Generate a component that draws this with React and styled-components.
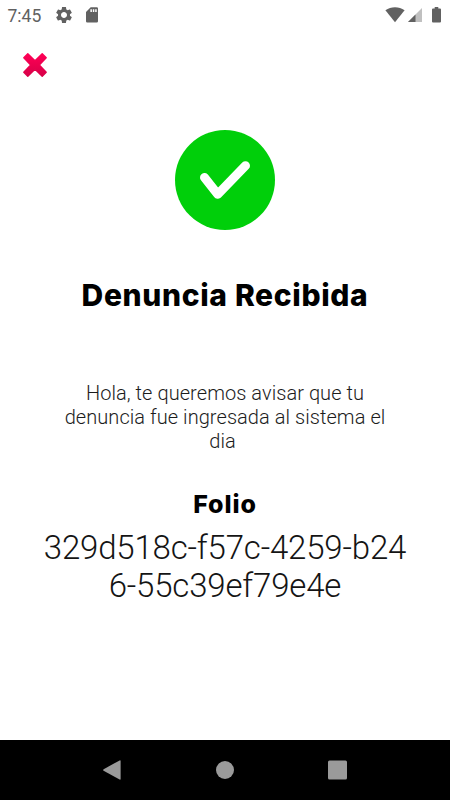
import React from 'react';
import styled, { createGlobalStyle } from 'styled-components';

const GlobalStyle = createGlobalStyle`
  * { box-sizing: border-box; }
  body { margin: 0; background: #fff; }
`;

const Screen = styled.div`
  width: 450px;
  height: 800px;
  display: flex;
  flex-direction: column;
  background: #fff;
  font-family: Roboto, sans-serif;
  color: #000;
  overflow: hidden;
`;

const StatusBar = styled.header`
  height: 30px;
  flex: none;
  display: flex;
  align-items: center;
  padding: 0 9px 0 7.5px;
  color: #616161;
`;

const Clock = styled.span`
  width: 46.5px;
  font-size: 17.5px;
  line-height: 30px;
  padding-top: 2px;
`;

const StatusIcon = styled.svg`
  display: block;
  flex: none;
  fill: currentColor;
  margin-left: ${(p) => p.$gap || 0}px;
`;

const Spacer = styled.div`
  flex: 1;
`;

const Content = styled.main`
  flex: 1;
  display: flex;
  flex-direction: column;
  align-items: center;
`;

const CloseButton = styled.button`
  align-self: flex-start;
  margin: 22px 0 0 22px;
  width: 26px;
  height: 26px;
  padding: 0;
  border: 0;
  background: none;
`;

const Glyph = styled.svg`
  display: block;
  flex: none;
`;

const SuccessIcon = styled(Glyph)`
  margin-top: 52px;
`;

const Title = styled.h1`
  margin: 45px 0 0;
  font: 850 30px/40px Inter, sans-serif;
  letter-spacing: 0.65px;
  white-space: nowrap;
`;

const Message = styled.p`
  margin: 66px 0 0;
  font-weight: 300;
  font-size: 20px;
  line-height: 24px;
  letter-spacing: 0.06px;
  color: #1c1c1c;
  text-align: center;
  white-space: pre;
`;

const Subtitle = styled.h2`
  margin: 34px 0 0;
  font: 850 25px/34px Inter, sans-serif;
  letter-spacing: 0.9px;
`;

const Code = styled.p`
  margin: 8px 0 0;
  font-weight: 300;
  font-size: 33px;
  line-height: 38px;
  letter-spacing: -0.18px;
  color: #141414;
  text-align: center;
`;

const NavBar = styled.nav`
  height: 60px;
  flex: none;
  background: #000;
  display: flex;
  justify-content: center;
  align-items: center;
  gap: 92.5px;
`;

const NavIcon = styled(Glyph)`
  fill: #9a9a9a;
`;

export default function App() {
  return (
    <Screen>
      <GlobalStyle />
      <StatusBar>
        <Clock>7:45</Clock>
        <StatusIcon width="20" height="20" viewBox="0 0 24 24">
          <path d="M19.14 12.94c.04-.3.06-.61.06-.94 0-.32-.02-.64-.07-.94l2.03-1.58c.18-.14.23-.41.12-.61l-1.92-3.32c-.12-.22-.37-.29-.59-.22l-2.39.96c-.5-.38-1.03-.7-1.62-.94l-.36-2.54c-.04-.24-.24-.41-.48-.41h-3.84c-.24 0-.43.17-.47.41l-.36 2.54c-.59.24-1.13.57-1.62.94l-2.39-.96c-.22-.08-.47 0-.59.22L2.74 8.87c-.12.21-.08.47.12.61l2.03 1.58c-.05.3-.09.63-.09.94s.02.64.07.94l-2.03 1.58c-.18.14-.23.41-.12.61l1.92 3.32c.12.22.37.29.59.22l2.39-.96c.5.38 1.03.7 1.62.94l.36 2.54c.05.24.24.41.48.41h3.84c.24 0 .44-.17.47-.41l.36-2.54c.59-.24 1.13-.56 1.62-.94l2.39.96c.22.08.47 0 .59-.22l1.92-3.32c.12-.22.07-.47-.12-.61l-2.01-1.58zM12 15.6c-1.98 0-3.6-1.62-3.6-3.6s1.62-3.6 3.6-3.6 3.6 1.62 3.6 3.6-1.62 3.6-3.6 3.6z" />
        </StatusIcon>
        <StatusIcon $gap={12} width="12" height="16" viewBox="0 0 12 16">
          <path fillRule="evenodd" d="M4.7 .3H10.7Q12 .3 12 1.6V14.2Q12 15.5 10.7 15.5H1.3Q0 15.5 0 14.2V5ZM4.4 2.2V5H5.9V2.2ZM6.8 2.2V5H8.3V2.2ZM9.2 2.2V5H10.7V2.2Z" />
        </StatusIcon>
        <Spacer />
        <StatusIcon width="20" height="16" viewBox="0 0 20 16">
          <path d="M.4 3.2C6-.7 14-.7 19.6 3.2L10 15.3Z" />
        </StatusIcon>
        <StatusIcon $gap={3} width="14" height="14" viewBox="0 0 14 14">
          <path opacity=".4" d="M14 0V14H0Z" />
          <path d="M7.5 6.5V14H0Z" />
        </StatusIcon>
        <StatusIcon $gap={10} width="9" height="16" viewBox="0 0 9 16">
          <path d="M2.7 0H6.3V1.5H8Q9 1.5 9 2.5V14.6Q9 15.6 8 15.6H1Q0 15.6 0 14.6V2.5Q0 1.5 1 1.5H2.7Z" />
        </StatusIcon>
      </StatusBar>
      <Content>
        <CloseButton aria-label="Cerrar">
          <Glyph width="26" height="26" viewBox="0 0 26 26">
            <defs>
              <linearGradient id="closeFill" x1="0" y1="0" x2="0" y2="1">
                <stop offset="0" stopColor="#ff0055" />
                <stop offset="1" stopColor="#d80048" />
              </linearGradient>
            </defs>
            <path fill="url(#closeFill)" stroke="url(#closeFill)" strokeWidth="1.4" strokeLinejoin="round" d="M5.8 1.8L13 8.7L20.2 1.8L24.2 5.8L17.3 13L24.2 20.2L20.2 24.2L13 17.3L5.8 24.2L1.8 20.2L8.7 13L1.8 5.8Z" />
          </Glyph>
        </CloseButton>
        <SuccessIcon width="100" height="100" viewBox="0 0 100 100">
          <circle cx="50" cy="50" r="50" fill="#00cf0a" />
          <path d="M29.5 47.5L42.7 64.3L70.5 35.7" fill="none" stroke="#fff" strokeWidth="9" strokeLinecap="round" strokeLinejoin="round" />
        </SuccessIcon>
        <Title>Denuncia Recibida</Title>
        <Message>{'Hola, te queremos avisar que tu\ndenuncia fue ingresada al sistema el\ndia '}</Message>
        <Subtitle>Folio</Subtitle>
        <Code>329d518c-f57c-4259-b24<br />6-55c39ef79e4e</Code>
      </Content>
      <NavBar>
        <NavIcon width="20" height="20" viewBox="2 0 20 20">
          <path d="M20.6 .4Q21.6 0 21.6 1V19Q21.6 20 20.6 19.6L4.6 10.8Q3.6 10 4.6 9.2Z" transform="translate(-2 0)" />
        </NavIcon>
        <NavIcon width="20" height="20" viewBox="0 0 20 20">
          <circle cx="10" cy="10" r="9" />
        </NavIcon>
        <NavIcon width="20" height="20" viewBox="0.5 0 20 20">
          <rect x="0.5" y="0.5" width="19" height="19" rx="1.5" />
        </NavIcon>
      </NavBar>
    </Screen>
  );
}
